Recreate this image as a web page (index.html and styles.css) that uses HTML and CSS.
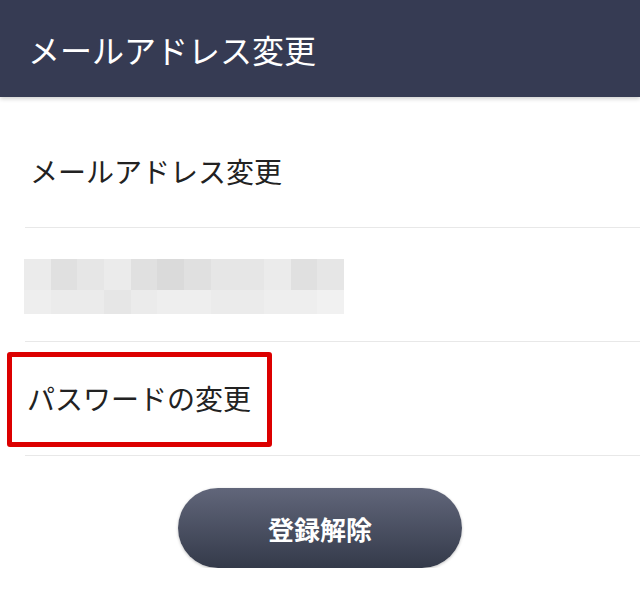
FILE: index.html
```html
<!doctype html>
<html lang="ja">
<head>
    <meta charset="UTF-8">
    <meta name="viewport" content="width=device-width, initial-scale=1.0">
    <title>メールアドレス変更</title>
    <link rel="stylesheet" href="styles.css">
</head>
<body>
<header class="bar">
    <h1 class="bar-title">メールアドレス変更</h1>
</header>
<ul class="menu">
    <li class="menu-item menu-item--first">メールアドレス変更</li>
    <li class="menu-item menu-item--mail">
        <div class="mosaic">
            <span class="c2"></span><span class="c4"></span><span class="c3"></span><span class="c2"></span>
            <span class="c4"></span><span class="c5"></span><span class="c4"></span><span class="c3"></span>
            <span class="c3"></span><span class="c2"></span><span class="c4"></span><span class="c3"></span>
            <span class="c1"></span><span class="c2"></span><span class="c2"></span><span class="c3"></span>
            <span class="c2"></span><span class="c1"></span><span class="c1"></span><span class="c2"></span>
            <span class="c2"></span><span class="c1"></span><span class="c1"></span><span class="c0"></span>
        </div>
    </li>
    <li class="menu-item menu-item--pass"><span class="marked">パスワードの変更</span></li>
</ul>
<div class="actions">
    <button class="btn-leave" type="button">登録解除</button>
</div>
</body>
</html>
```

FILE: styles.css
```css
html * {
    margin: 0;
    padding: 0;
    box-sizing: border-box;
}

body {
    background-color: #fff;
    font-family: "Noto Sans CJK JP", "Noto Sans", sans-serif;
    color: #222;
}

ul, li {
    list-style: none;
}

.bar {
    display: flex;
    align-items: center;
    height: 97px;
    padding-left: 28px;
    background-color: #363b53;
    box-shadow: 0 2px 4px rgba(0, 0, 0, .18);
}

.bar-title {
    font-size: 32px;
    font-weight: 400;
    line-height: 40px;
    color: #fff;
}

.menu {
    margin-left: 25px;
}

.menu-item {
    border-bottom: 1px solid #e8e8e8;
    font-size: 28px;
    line-height: 40px;
}

.menu-item--first {
    height: 131px;
    padding: 54px 0 0 5px;
}

.menu-item--mail {
    height: 114px;
    padding-top: 31px;
}

.mosaic {
    display: grid;
    grid-template-columns: repeat(12, 26.67px);
    grid-template-rows: 31px 24px;
    width: 320px;
    margin-left: -1px;
}

.mosaic .c0 { background-color: #f1f1f1; }
.mosaic .c1 { background-color: #eeeeee; }
.mosaic .c2 { background-color: #ebebeb; }
.mosaic .c3 { background-color: #e6e6e6; }
.mosaic .c4 { background-color: #e0e0e0; }
.mosaic .c5 { background-color: #dadada; }

.menu-item--pass {
    height: 114px;
    padding: 36px 0 0 2px;
}

.marked {
    position: relative;
    display: inline-block;
}

.marked::before {
    content: "";
    position: absolute;
    box-sizing: border-box;
    left: -20px;
    top: -26px;
    width: 265px;
    height: 95px;
    border: 5px solid #dc0000;
    border-radius: 3px;
}

.actions {
    display: flex;
    justify-content: center;
    padding-top: 32px;
}

.btn-leave {
    width: 284px;
    height: 80px;
    border: none;
    border-radius: 40px;
    background: linear-gradient(#61667a, #343a4a);
    box-shadow: 0 1px 3px rgba(0, 0, 0, .25);
    color: #fff;
    font-family: "Noto Sans CJK JP", sans-serif;
    font-size: 26px;
    font-weight: 700;
}
```
